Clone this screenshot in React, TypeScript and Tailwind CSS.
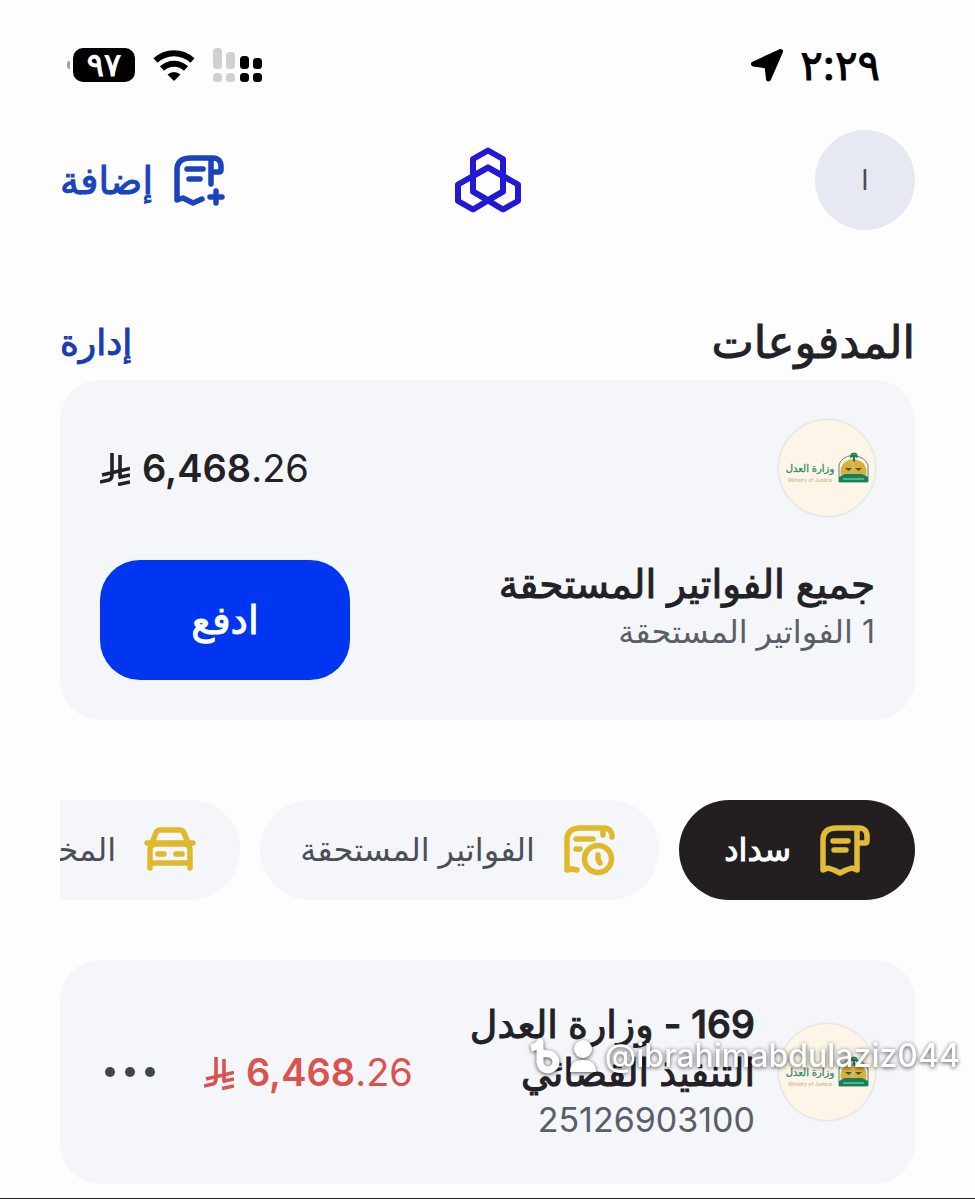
import type { ReactNode } from 'react';

interface Category {
  id: string;
  label: string;
  icon: ReactNode;
}

function BatteryBadge() {
  return (
    <div className="flex items-center gap-[3px]">
      <div className="h-2 w-[3px] rounded-l-full bg-neutral-400" />
      <div className="flex h-[34px] w-[62px] items-center justify-center rounded-[10px] bg-black text-[32px] leading-none text-white [-webkit-text-stroke:1px]">
        ٩٧
      </div>
    </div>
  );
}

function WifiIcon() {
  return (
    <svg className="h-8 w-[42px]" viewBox="0 0 42 32" fill="none" stroke="black" strokeWidth="6">
      <path d="M2.500 11.500a27 27 0 0 1 37 0" />
      <path d="M9 19.500a17.500 17.500 0 0 1 24 0" />
      <path d="M14.500 25.500a9.500 9.500 0 0 1 13 0L21 32Z" fill="black" stroke="none" />
    </svg>
  );
}

function SignalIcon() {
  return (
    <svg className="h-[34px] w-[50px]" viewBox="0 0 50 34">
      <g fill="#d0d0d0">
        <rect x="0" y="0" width="9" height="21" rx="3.500" />
        <rect x="13" y="4" width="9" height="17" rx="3.500" />
        <rect x="0" y="25" width="9" height="9" rx="3.500" />
        <rect x="13" y="25" width="9" height="9" rx="3.500" />
      </g>
      <rect x="27" y="8" width="9" height="13" rx="3.500" />
      <rect x="40" y="10" width="9" height="11" rx="3.500" />
      <rect x="27" y="25" width="9" height="9" rx="3.500" />
      <rect x="40" y="25" width="9" height="9" rx="3.500" />
    </svg>
  );
}

function LocationArrow() {
  return (
    <svg className="size-[34px]" viewBox="0 0 34 34" strokeLinejoin="round" stroke="black" strokeWidth="5">
      <path d="M30.500 3.500 3.500 16l13.500 2L18.500 31Z" />
    </svg>
  );
}

function BankLogo() {
  return (
    <svg
      className="size-[68px]"
      viewBox="24 16 68 68"
      fill="none"
      stroke="#2318d6"
      strokeWidth="6"
      strokeLinejoin="round"
      role="img"
      aria-label="مصرف الراجحي"
    >
      <path d="M58 20.500 73 29v32.500L58 70 43 61.500V29Z" />
      <path d="M58 37.500 73 46v15.500L43 79.500 28 71V54.500Z" />
      <path d="M58 37.500 43 46v15.500L73 79.500 88 71V54.500Z" />
    </svg>
  );
}

function LineIcon({ children }: { children: ReactNode }) {
  return (
    <svg
      className="size-[60px] shrink-0"
      viewBox="0 0 60 60"
      fill="none"
      stroke="currentColor"
      strokeWidth="5.500"
      strokeLinecap="round"
      strokeLinejoin="round"
      aria-hidden="true"
    >
      {children}
    </svg>
  );
}

function AddBillIcon() {
  return (
    <LineIcon>
      <path d="M42 8h2c5 0 8 3 8 8v4q0 2-2 2h-8M42 34V8H22C13 8 8 12 8 20v30l6-2 10 5 9-4" />
      <path d="M18 19h16M20 29h11M47 41v12M41 47h12" />
    </LineIcon>
  );
}

function BillIcon() {
  return (
    <LineIcon>
      <path d="M42 8h2c5 0 8 3 8 8v5q0 2-2 2h-8M42 8v42l-5-2-6 2-6 3-6-3-6-2-5 2V20C8 12 13 8 22 8Z" />
      <path d="M18 21h15M19 30h12" />
    </LineIcon>
  );
}

function DueBillIcon() {
  return (
    <LineIcon>
      <path d="M44 15V8H22C13 8 8 12 8 20v30l5-1 5 1M44 8h1c5 0 8 3 8 9" />
      <path d="M17 19h17M17 29h4" />
      <circle cx="39" cy="39" r="13.500" />
      <path d="M39 35v4l2 4" />
    </LineIcon>
  );
}

function CarIcon() {
  return (
    <LineIcon>
      <path d="m11 25 5-12q1-3 5-3h18q4 0 5 3l5 12M7 23h46" />
      <path d="M10 48V30q0-6 6-6h28q6 0 6 6v18M10 43h40M18 34h6M36 34h6" />
    </LineIcon>
  );
}

function RiyalSign() {
  return (
    <svg
      className="h-9 w-[30px] shrink-0"
      viewBox="0 0 30 36"
      fill="none"
      stroke="currentColor"
      strokeWidth="3.600"
      role="img"
      aria-label="ريال"
    >
      <path d="M12 3v22q0 4-3 5L0 32M20 5v22M2 25l28-6.500M18.500 27.500 30 25M18 34.500 30 32" />
    </svg>
  );
}

function MinistryLogo() {
  return (
    <svg
      className="size-24 shrink-0 rounded-full bg-[#fdf6e8] shadow-[0_0_2px_1px_#dedfdc]"
      viewBox="0 0 96 96"
      role="img"
      aria-label="وزارة العدل"
    >
      <text x="31" y="52" fontSize="10" fill="#2e8a6a" stroke="#2e8a6a" strokeWidth="0.300" textAnchor="middle" direction="rtl">
        وزارة العدل
      </text>
      <text x="31" y="62" fontSize="5" fill="#c9a878" textAnchor="middle" direction="ltr">
        Ministry of Justice
      </text>
      <path d="M60 62V45q2-8 14-10 12 2 15 10v17Z" fill="#fdf6e8" stroke="#3f8f74" strokeWidth="1" />
      <path d="M62 57q-2-11 4-15 4-3 8-3t9 3q6 4 4 15Z" fill="#dcae3c" />
      <path d="M60 62v-5l6-3h17l6 3v5Z" fill="#14805c" />
      <path d="M66 48h7l-3.500 3ZM76 48h7l-3.500 3Z" fill="#4c5a1c" />
      <path d="M75 42v-7M72 35q3-3 6 0M71 37q4-2 8 0" fill="none" stroke="#14805c" strokeWidth="2" />
      <path d="M74 41v13M64 59h21" stroke="#a8d8b8" strokeWidth="1" />
    </svg>
  );
}

function Amount({ whole, fraction }: { whole: string; fraction: string }) {
  return (
    <div dir="ltr" className="flex items-center gap-3 text-[38px] leading-12">
      <RiyalSign />
      <span>
        <span className="font-semibold">{whole}</span>
        {fraction}
      </span>
    </div>
  );
}

function Watermark() {
  return (
    <div
      dir="ltr"
      className="pointer-events-none absolute top-[72px] -right-[45px] flex items-center gap-2 text-[32px] leading-12 font-medium text-white drop-shadow-[0_1px_2px_rgba(0,0,0,0.7)]"
    >
      <svg className="h-9 w-8" viewBox="0 0 32 36" fill="none" stroke="white" strokeWidth="7" strokeLinejoin="round">
        <path d="M2 10q6-1 9-6v19a8 8 0 1 0 9-7q-5 0-9-2" />
      </svg>
      <svg className="h-9 w-7" viewBox="0 0 28 36" fill="white">
        <circle cx="14" cy="11" r="9" />
        <path d="M1 34q0-12 13-12t13 12Z" />
      </svg>
      <span>@ibrahimabdulaziz044</span>
    </div>
  );
}

const categories: Category[] = [
  { id: 'sadad', label: 'سداد', icon: <BillIcon /> },
  { id: 'due', label: 'الفواتير المستحقة', icon: <DueBillIcon /> },
  { id: 'violations', label: 'المخالفات', icon: <CarIcon /> }
];

export default function App() {
  const active = 'sadad';

  return (
    <div
      dir="rtl"
      className="overflow-hidden border-b border-[#222] bg-[#fdfdfd] pb-[14px] font-['Inter','DejaVu_Sans',sans-serif] text-[#222126]"
    >
      <div className="flex h-[130px] items-center justify-between pr-[95px] pl-[67px]">
        <div className="flex items-center gap-4 text-black">
          <span className="text-[42px] leading-none [-webkit-text-stroke:1px]">٢:٢٩</span>
          <LocationArrow />
        </div>
        <div dir="ltr" className="flex items-center gap-[18px]">
          <BatteryBadge />
          <WifiIcon />
          <SignalIcon />
        </div>
      </div>

      <main className="px-[60px]">
        <header className="grid grid-cols-3 items-center">
          <button className="size-[100px] rounded-full bg-[#e6e9f2] text-[28px] text-[#4a4c58]">ا</button>
          <div className="flex justify-center">
            <BankLogo />
          </div>
          <button className="flex items-center gap-4 justify-self-end text-[38px] text-[#1a44bd] [-webkit-text-stroke:1px]">
            <AddBillIcon />
            إضافة
          </button>
        </header>

        <div className="flex h-[150px] items-end justify-between pb-[14px]">
          <h1 className="text-[45px] leading-12 [-webkit-text-stroke:1px]">المدفوعات</h1>
          <button className="text-[36px] leading-12 text-[#1a3cae] [-webkit-text-stroke:1px]">إدارة</button>
        </div>

        <section className="rounded-[40px] bg-[#f4f6fa] p-10">
          <div className="flex items-center justify-between">
            <MinistryLogo />
            <Amount whole="6,468" fraction=".26" />
          </div>
          <div className="mt-11 flex items-start justify-between">
            <div>
              <h2 className="text-[39px] leading-12 [-webkit-text-stroke:1px]">جميع الفواتير المستحقة</h2>
              <p className="text-[32px] leading-12 text-[#5a5e68]">1 الفواتير المستحقة</p>
            </div>
            <button className="h-[120px] w-[250px] rounded-[40px] bg-[#0036f0] text-[39px] text-white [-webkit-text-stroke:1px]">
              ادفع
            </button>
          </div>
        </section>

        <div className="mt-20 flex gap-5 overflow-hidden">
          {categories.map((category) => (
            <button
              key={category.id}
              className={`flex h-[100px] min-w-[236px] shrink-0 items-center gap-6 rounded-full px-10 text-[32px] ${
                category.id === active
                  ? 'bg-[#231f20] text-white [-webkit-text-stroke:1px]'
                  : 'bg-[#f4f6fa] text-[#4b4e58]'
              }`}
            >
              <span className={category.id === active ? 'text-[#e3bc35]' : 'text-[#dfb92b]'}>{category.icon}</span>
              {category.label}
            </button>
          ))}
        </div>

        <div className="relative mt-[60px]">
          <article className="flex items-center gap-6 rounded-[40px] bg-[#f4f6fa] p-10">
            <MinistryLogo />
            <div className="flex-1">
              <h3 className="text-[38px] leading-12 font-medium [-webkit-text-stroke:1px]">
                169 - وزارة العدل
                <br />
                التنفيذ القضائي
              </h3>
              <p className="text-[34px] leading-12 text-[#5a5e68]">25126903100</p>
            </div>
            <div className="text-[#d9534f]">
              <Amount whole="6,468" fraction=".26" />
            </div>
            <button aria-label="المزيد" className="mr-5 text-[#40444f]">
              <svg className="h-5 w-[60px]" viewBox="0 0 60 20" fill="currentColor">
                <circle cx="10" cy="10" r="5" />
                <circle cx="30" cy="10" r="5" />
                <circle cx="50" cy="10" r="5" />
              </svg>
            </button>
          </article>
          <Watermark />
        </div>
      </main>
    </div>
  );
}
